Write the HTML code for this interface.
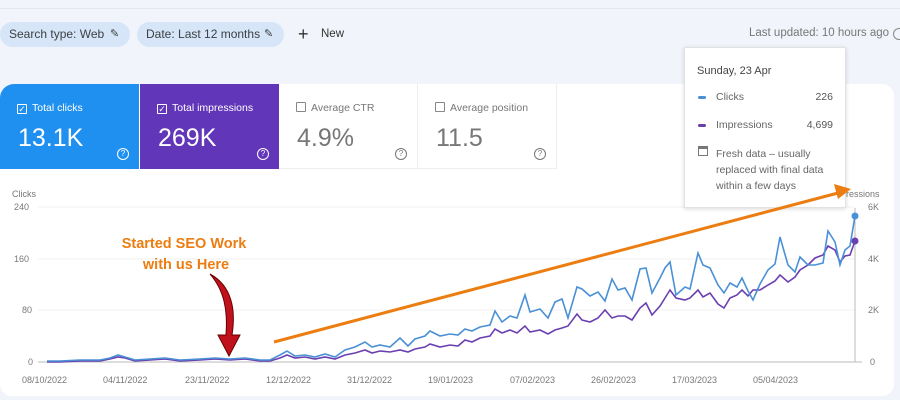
<!DOCTYPE html>
<html><head><meta charset="utf-8"><style>
*{margin:0;padding:0;box-sizing:border-box}
body{width:900px;height:400px;background:#f1f4fa;font-family:"Liberation Sans",sans-serif;position:relative;overflow:hidden}
.topline{position:absolute;left:0;top:8px;width:900px;height:1px;background:#e3e7ee}
.chip{position:absolute;top:22px;height:25px;border-radius:13px;background:#d6e5f8;font-size:12px;color:#3c4043;line-height:25px;padding-left:9px}
.card{position:absolute;left:0;top:84px;width:894px;height:312px;background:#fff;border-radius:14px 12px 12px 12px}
.tile{position:absolute;top:84px;width:139px;height:85px}
.tile .lab{position:absolute;left:17px;top:18px;font-size:10.5px}
.tile .cb{display:inline-block;width:10px;height:10px;border:1px solid;vertical-align:-1px;margin-right:5px;border-radius:1px;position:relative;font-size:9px;line-height:8px;text-align:center}
.tile .val{position:absolute;left:18px;top:40px;font-size:25px}
.tile .q{position:absolute;right:10px;top:64px;width:12px;height:12px;border:1px solid;border-radius:50%;font-size:8px;text-align:center;line-height:10px}
.ax{position:absolute;font-size:9px;color:#777}
.tip{position:absolute;left:684px;top:47px;width:162px;height:161px;background:#fff;border:1px solid #e2e2e2;box-shadow:0 1px 4px rgba(0,0,0,.15);font-size:10.5px;color:#666}
</style></head><body>
<div class="topline"></div>
<div class="chip" style="left:0;width:130px">Search type: Web <span style="position:absolute;left:110px;font-size:11px">✎</span></div>
<div class="chip" style="left:137px;width:147px">Date: Last 12 months <span style="position:absolute;left:127px;font-size:11px">✎</span></div>
<div style="position:absolute;left:298px;top:24px;font-size:18px;color:#333;line-height:20px">+</div>
<div style="position:absolute;left:321px;top:28px;font-size:11.5px;color:#333">New</div>
<div style="position:absolute;left:749px;top:27px;font-size:11.5px;color:#777">Last updated: 10 hours ago</div>
<div style="position:absolute;left:893px;top:28px;width:12px;height:12px;border:1px solid #888;border-radius:50%"></div>
<div class="card"></div>
<div class="tile" style="left:0;background:#2090f0;color:#fff;border-radius:14px 0 0 0"><div class="lab"><span class="cb">✓</span>Total clicks</div><div class="val">13.1K</div><div class="q">?</div></div>
<div class="tile" style="left:140px;background:#6236b8;color:#fff"><div class="lab"><span class="cb">✓</span>Total impressions</div><div class="val">269K</div><div class="q">?</div></div>
<div class="tile" style="left:279px;color:#777;border-right:1px solid #eee;border-bottom:1px solid #eee"><div class="lab"><span class="cb" style="border-color:#888"></span>Average CTR</div><div class="val">4.9%</div><div class="q">?</div></div>
<div class="tile" style="left:418px;color:#777;border-right:1px solid #eee;border-bottom:1px solid #eee"><div class="lab"><span class="cb" style="border-color:#888"></span>Average position</div><div class="val">11.5</div><div class="q">?</div></div>
<div class="ax" style="left:12px;top:189px">Clicks</div>
<div class="ax" style="left:14px;top:202px">240</div>
<div class="ax" style="left:14px;top:254px">160</div>
<div class="ax" style="left:22px;top:305px">80</div>
<div class="ax" style="left:28px;top:357px">0</div>
<div class="ax" style="left:846px;top:189px">ressions</div>
<div class="ax" style="left:868px;top:202px">6K</div>
<div class="ax" style="left:868px;top:254px">4K</div>
<div class="ax" style="left:868px;top:305px">2K</div>
<div class="ax" style="left:870px;top:357px">0</div>
<div class="ax" style="left:22px;top:375px">08/10/2022</div>
<div class="ax" style="left:103px;top:375px">04/11/2022</div>
<div class="ax" style="left:185px;top:375px">23/11/2022</div>
<div class="ax" style="left:266px;top:375px">12/12/2022</div>
<div class="ax" style="left:347px;top:375px">31/12/2022</div>
<div class="ax" style="left:428px;top:375px">19/01/2023</div>
<div class="ax" style="left:510px;top:375px">07/02/2023</div>
<div class="ax" style="left:591px;top:375px">26/02/2023</div>
<div class="ax" style="left:672px;top:375px">17/03/2023</div>
<div class="ax" style="left:753px;top:375px">05/04/2023</div>
<svg style="position:absolute;left:0;top:0" width="900" height="400">
<g stroke="#f0f0f0" stroke-width="1"><line x1="38" y1="207" x2="855" y2="207"/><line x1="38" y1="259" x2="855" y2="259"/><line x1="38" y1="310" x2="855" y2="310"/></g>
<line x1="38" y1="362" x2="862" y2="362" stroke="#bbb"/>
<line x1="855" y1="208" x2="855" y2="362" stroke="#bbb"/>
<polyline fill="none" stroke="#6a3fb0" stroke-width="1.6" points="47,362 60,362 80,361 100,361 110,359 118,357 125,358 135,361 150,360 165,359 180,361 200,360 215,359 230,360 245,359 260,361 270,361 280,358 287,355 295,358 305,357 315,359 325,357 335,359 345,355 355,353 365,350 372,353 380,351 390,352 400,350 408,352 415,349 425,347 430,344 440,347 450,345 458,346 465,340 472,342 480,338 490,336 495,329 502,333 510,330 517,333 525,326 530,332 540,330 548,334 555,330 562,328 568,326 577,314 582,320 590,322 598,318 605,310 612,318 618,316 625,316 632,320 640,308 646,303 652,315 660,306 665,298 670,290 676,298 685,300 690,298 698,290 703,297 710,293 718,304 724,308 730,298 737,295 742,290 748,296 753,290 760,290 768,285 775,281 780,275 788,282 795,277 800,270 808,265 815,258 823,255 828,246 835,250 840,262 845,256 850,255 855,241"/>
<polyline fill="none" stroke="#4a90d6" stroke-width="1.6" points="47,361 60,361 80,360 100,360 110,358 118,355 125,357 135,360 150,359 165,358 180,360 200,359 215,358 230,359 245,358 260,360 270,360 280,355 287,351 295,356 305,355 315,357 325,354 335,357 345,350 355,347 365,342 372,347 380,345 390,347 400,338 408,346 415,339 425,336 430,331 440,336 450,334 458,335 465,329 472,331 480,327 490,325 495,311 502,322 510,316 517,318 525,295 530,312 540,309 548,318 555,302 562,299 568,318 577,287 582,289 590,296 598,292 605,301 612,279 618,290 625,288 632,300 640,269 646,268 652,293 660,278 665,268 670,262 676,295 685,287 690,289 698,253 703,265 710,268 718,285 724,293 730,283 737,287 742,278 748,291 753,300 760,284 768,270 775,264 780,237 788,265 795,272 800,257 808,265 815,265 823,263 828,231 835,242 840,265 845,250 850,246 855,216"/>
<circle cx="855" cy="216" r="3.5" fill="#4a90d6"/><circle cx="855" cy="241" r="3.5" fill="#6a3fb0"/>
<path d="M210,274 C232,286 236,310 232,335 L240,335 L229,356 L218,335 L226,335 C228,310 224,290 210,274 Z" fill="#c0121c" stroke="#6a0000" stroke-width="1"/>
<text x="184" y="248" text-anchor="middle" font-family="Liberation Sans,sans-serif" font-weight="bold" font-size="14.5" fill="#ec7d10">Started SEO Work</text>
<text x="186" y="269" text-anchor="middle" font-family="Liberation Sans,sans-serif" font-weight="bold" font-size="14.5" fill="#ec7d10">with us Here</text>
</svg>
<div class="tip">
<div style="position:absolute;left:12px;top:17px;color:#444;font-size:11px">Sunday, 23 Apr</div>
<div style="position:absolute;left:13px;top:48px;width:8px;height:3px;background:#4a90d6;border-radius:2px"></div>
<div style="position:absolute;left:31px;top:43px">Clicks</div><div style="position:absolute;right:12px;top:43px;color:#555">226</div>
<div style="position:absolute;left:13px;top:76px;width:8px;height:3px;background:#6a3fb0;border-radius:2px"></div>
<div style="position:absolute;left:31px;top:71px">Impressions</div><div style="position:absolute;right:12px;top:71px;color:#555">4,699</div>
<div style="position:absolute;left:13px;top:98px;width:10px;height:10px;border:1.5px solid #777;border-top-width:3px"></div>
<div style="position:absolute;left:31px;top:98px;line-height:16px;width:125px">Fresh data – usually replaced with final data within a few days</div>
</div>
<svg style="position:absolute;left:0;top:0" width="900" height="400">
<line x1="274" y1="342" x2="838" y2="193" stroke="#ec7d10" stroke-width="3"/>
<polygon points="851,189 834,184 838,199" fill="#ec7d10"/>
</svg>
</body></html>
